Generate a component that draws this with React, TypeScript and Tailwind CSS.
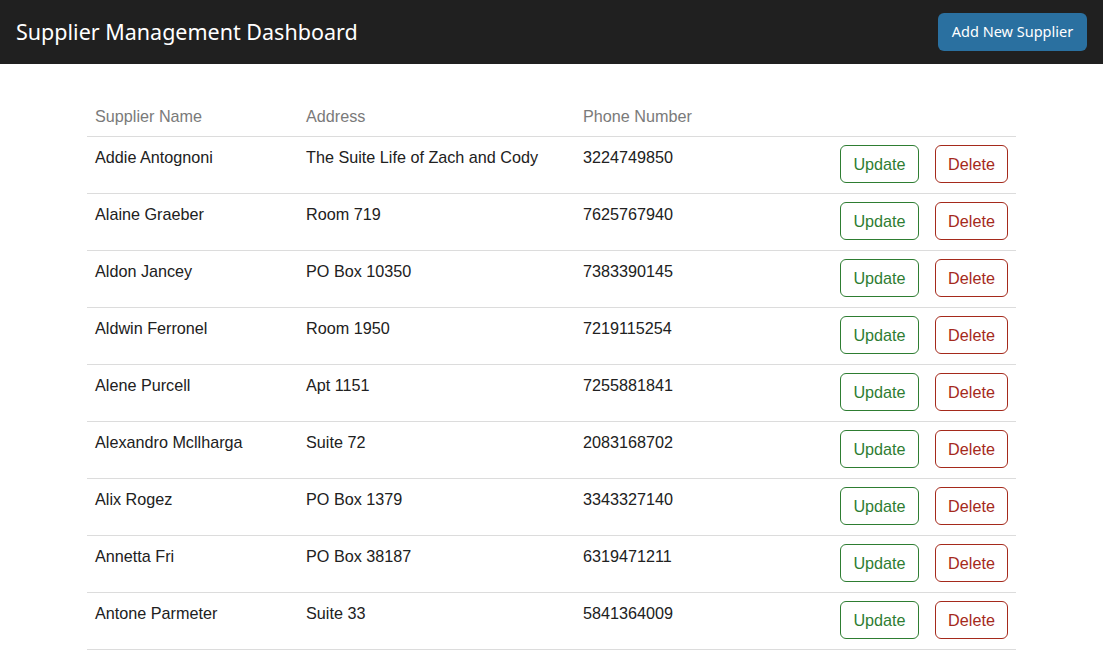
import React from "react";

const rows: [string, string, string][] = [
  ["Addie Antognoni", "The Suite Life of Zach and Cody", "3224749850"],
  ["Alaine Graeber", "Room 719", "7625767940"],
  ["Aldon Jancey", "PO Box 10350", "7383390145"],
  ["Aldwin Ferronel", "Room 1950", "7219115254"],
  ["Alene Purcell", "Apt 1151", "7255881841"],
  ["Alexandro Mcllharga", "Suite 72", "2083168702"],
  ["Alix Rogez", "PO Box 1379", "3343327140"],
  ["Annetta Fri", "PO Box 38187", "6319471211"],
  ["Antone Parmeter", "Suite 33", "5841364009"],
];

export default function App() {
  return (
    <div className="min-h-[650px] bg-white font-['Liberation_Sans',Arial,sans-serif]">
      <header className="h-16 bg-[#202020] flex items-center justify-between pl-4 pr-4">
        <h1 className="text-white text-[21.5px] font-['Noto_Sans',sans-serif]">
          Supplier Management Dashboard
        </h1>
        <button className="w-[149px] h-[38px] mt-[-1px] rounded-[6px] bg-[#2a70a0] text-white text-[14.5px] font-['Noto_Sans',sans-serif]">
          Add New Supplier
        </button>
      </header>
      <div className="pt-8 pl-[87px]">
        <div className="w-[929px]">
          <div className="flex h-[41px] border-b border-[#dcdcdc] text-[#7a7a7a] text-[16.2px]">
            <div className="w-[211px] px-2 pt-[8px]">Supplier Name</div>
            <div className="w-[277px] px-2 pt-[8px]">Address</div>
            <div className="flex-1 px-2 pt-[8px]">Phone Number</div>
          </div>
          {rows.map((r) => (
            <div key={r[0]} className="flex h-[57px] border-b border-[#dcdcdc] text-[#212121] text-[16.2px]">
              <div className="w-[211px] px-2 pt-[8px]">{r[0]}</div>
              <div className="w-[277px] px-2 pt-[8px]">{r[1]}</div>
              <div className="flex-1 px-2 pt-[8px]">{r[2]}</div>
              <div className="flex gap-4 pr-2 pt-[8px]">
                <button className="w-[79px] h-[38px] rounded-[6px] border border-[#2e7d32] text-[#2e7d32] text-[16.2px]">
                  Update
                </button>
                <button className="w-[73px] h-[38px] rounded-[6px] border border-[#a52a1c] text-[#a52a1c] text-[16.2px]">
                  Delete
                </button>
              </div>
            </div>
          ))}
        </div>
      </div>
    </div>
  );
}
